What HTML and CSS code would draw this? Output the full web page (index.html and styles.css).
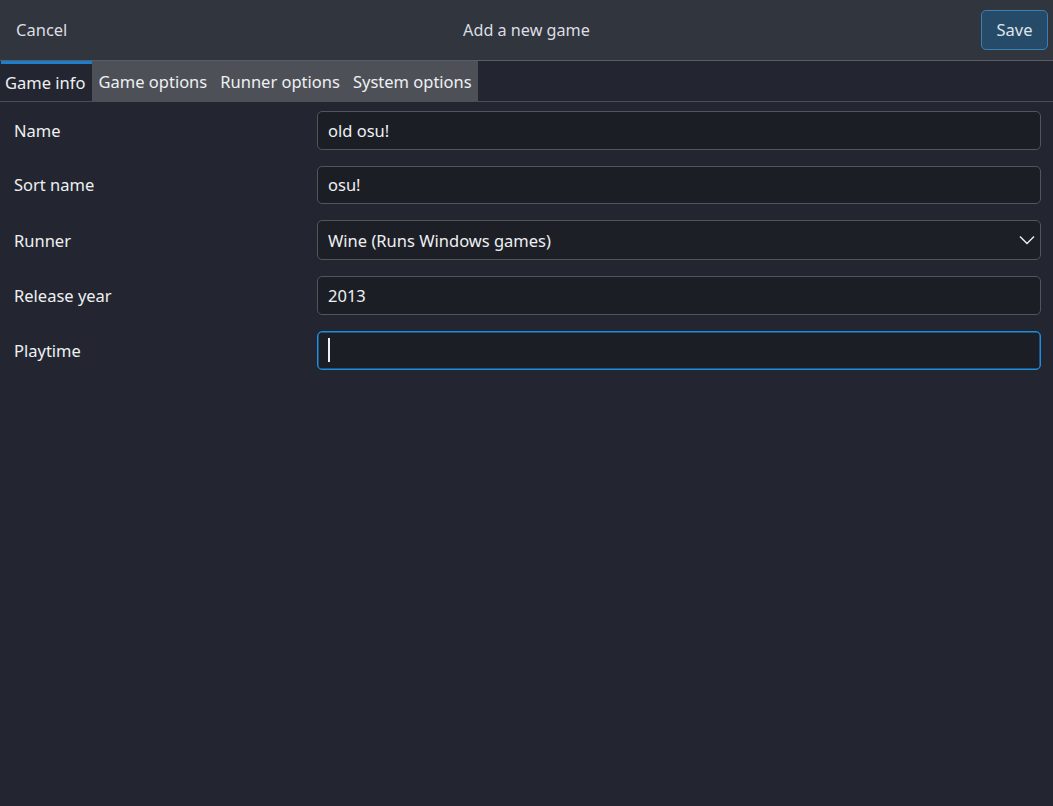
FILE: index.html
```html
<!DOCTYPE html>
<html>
<head>
<meta charset="utf-8">
<link rel="stylesheet" href="styles.css">
</head>
<body>
<div class="window">
  <header class="headerbar">
    <button class="btn-flat">Cancel</button>
    <div class="title">Add a new game</div>
    <button class="btn-save">Save</button>
  </header>
  <nav class="tabs">
    <div class="tab active">Game info</div>
    <div class="tab-group">
      <div class="tab">Game options</div>
      <div class="tab">Runner options</div>
      <div class="tab">System options</div>
    </div>
  </nav>
  <main class="form">
    <div class="row">
      <div class="label">Name</div>
      <div class="entry">old osu!</div>
    </div>
    <div class="row">
      <div class="label">Sort name</div>
      <div class="entry">osu!</div>
    </div>
    <div class="row">
      <div class="label">Runner</div>
      <div class="entry combo">
        <span>Wine (Runs Windows games)</span>
        <svg class="chev" width="16" height="10" viewBox="0 0 16 10"><path d="M1 1.5 L8 8.5 L15 1.5" fill="none" stroke="#eef0f2" stroke-width="1.4"/></svg>
      </div>
    </div>
    <div class="row">
      <div class="label">Release year</div>
      <div class="entry">2013</div>
    </div>
    <div class="row">
      <div class="label">Playtime</div>
      <div class="entry focused"><span class="caret"></span></div>
    </div>
  </main>
</div>
</body>
</html>
```
FILE: styles.css
```css
html, body {
  margin: 0;
  padding: 0;
  height: 100%;
}
body {
  background: #232630;
  font-family: "Noto Sans", "Open Sans", sans-serif;
  font-size: 16.5px;
  color: #eef0f2;
}
.window {
  display: flex;
  flex-direction: column;
  height: 806px;
}
.headerbar {
  height: 61px;
  box-sizing: border-box;
  background: #31353e;
  border-bottom: 1px solid #595c62;
  display: flex;
  align-items: center;
  justify-content: space-between;
  padding: 0 5px 1px 5px;
  position: relative;
}
.btn-flat {
  background: none;
  border: none;
  color: #dcdee2;
  font: inherit;
  padding: 0 11px;
  height: 40px;
}
.title {
  position: absolute;
  left: 0;
  right: 0;
  text-align: center;
  color: #dcdee2;
  font-size: 16.2px;
  pointer-events: none;
}
.btn-save {
  background: #264b68;
  border: 1px solid #3b80b3;
  border-radius: 5px;
  color: #dfe4ea;
  font: inherit;
  width: 67px;
  height: 40px;
  padding: 0;
  position: relative;
  z-index: 1;
}
.tabs {
  height: 41px;
  box-sizing: border-box;
  display: flex;
  border-bottom: 1px solid #4b4e55;
  padding-left: 1px;
}
.tab {
  height: 40px;
  line-height: 41px;
  white-space: nowrap;
}
.tab.active {
  background: #232630;
  border-top: 3px solid #1b7fd0;
  box-sizing: border-box;
  line-height: 37px;
  padding: 0 8px 0 4px;
  width: 91px;
}
.tab-group {
  display: flex;
  background: #4d5057;
}
.tab-group .tab {
  padding: 0 6.5px;
}
.form {
  display: flex;
  flex-direction: column;
  gap: 16px;
  padding: 9px 12px 0 14px;
}
.row {
  display: flex;
  align-items: center;
}
.label {
  width: 303px;
  flex: none;
}
.entry {
  flex: 1;
  height: 38.5px;
  box-sizing: border-box;
  background: #1c1e25;
  border: 1px solid #52555c;
  border-radius: 5px;
  padding: 0 10px;
  display: flex;
  align-items: center;
}
.combo {
  justify-content: space-between;
  height: 40px;
  background: #1d1f26;
  padding-right: 5px;
}
.chev {
  display: block;
}
.focused {
  height: 39.5px;
  border: 1px solid #1d8ee0;
  box-shadow: inset 0 0 0 0.5px #1d8ee0;
}
.caret {
  display: block;
  width: 2px;
  height: 24px;
  background: #eef0f2;
}
```
